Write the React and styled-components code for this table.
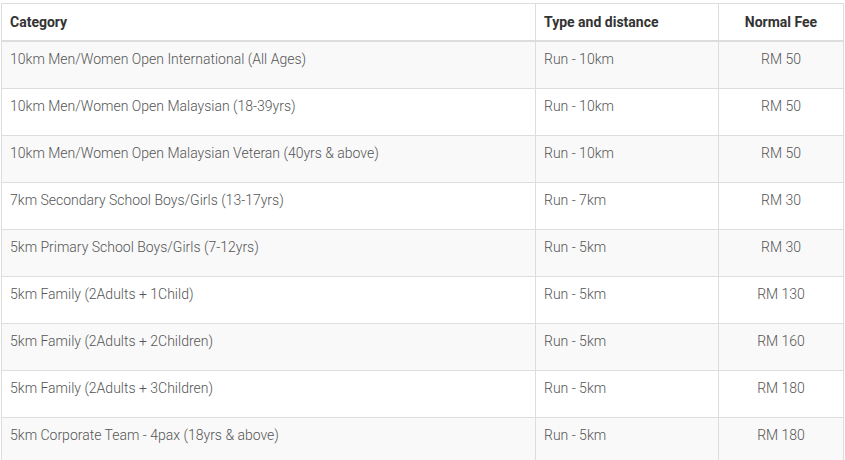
import React from 'react';
import styled, { createGlobalStyle } from 'styled-components';

const GlobalStyle = createGlobalStyle`
  body {
    margin: 0;
    background: #fff;
    font-family: Roboto, "Liberation Sans", sans-serif;
  }
`;

const Wrap = styled.div`
  padding: 3px 1px 0 1px;
`;

const Table = styled.table`
  width: 843px;
  table-layout: fixed;
  border-collapse: collapse;
  border: 1px solid #ddd;
  font-size: 14px;
`;

const Th = styled.th`
  height: 36px;
  padding: 0 8px;
  border: 1px solid #ddd;
  border-bottom: 2px solid #ddd;
  text-align: ${p => (p.center ? 'center' : 'left')};
  font-weight: 700;
  color: #333;
`;

const Row = styled.tr`
  background: ${p => (p.striped ? '#f9f9f9' : '#fff')};
`;

const Td = styled.td`
  height: 47px;
  box-sizing: border-box;
  padding: 9px 8px 0 8px;
  vertical-align: top;
  line-height: 17px;
  border: 1px solid #ddd;
  color: #555;
  font-weight: 300;
  text-align: ${p => (p.center ? 'center' : 'left')};
`;

const rows = [
  ['10km Men/Women Open International (All Ages)', 'Run - 10km', 'RM 50'],
  ['10km Men/Women Open Malaysian (18-39yrs)', 'Run - 10km', 'RM 50'],
  ['10km Men/Women Open Malaysian Veteran (40yrs & above)', 'Run - 10km', 'RM 50'],
  ['7km Secondary School Boys/Girls (13-17yrs)', 'Run - 7km', 'RM 30'],
  ['5km Primary School Boys/Girls (7-12yrs)', 'Run - 5km', 'RM 30'],
  ['5km Family (2Adults + 1Child)', 'Run - 5km', 'RM 130'],
  ['5km Family (2Adults + 2Children)', 'Run - 5km', 'RM 160'],
  ['5km Family (2Adults + 3Children)', 'Run - 5km', 'RM 180'],
  ['5km Corporate Team - 4pax (18yrs & above)', 'Run - 5km', 'RM 180'],
];

export default function App() {
  return (
    <Wrap>
      <GlobalStyle />
      <Table>
        <colgroup>
          <col style={{ width: 534 }} />
          <col style={{ width: 183 }} />
          <col />
        </colgroup>
        <thead>
          <tr>
            <Th>Category</Th>
            <Th>Type and distance</Th>
            <Th center>Normal Fee</Th>
          </tr>
        </thead>
        <tbody>
          {rows.map((r, i) => (
            <Row key={i} striped={i % 2 === 0}>
              <Td>{r[0]}</Td>
              <Td>{r[1]}</Td>
              <Td center>{r[2]}</Td>
            </Row>
          ))}
        </tbody>
      </Table>
    </Wrap>
  );
}
